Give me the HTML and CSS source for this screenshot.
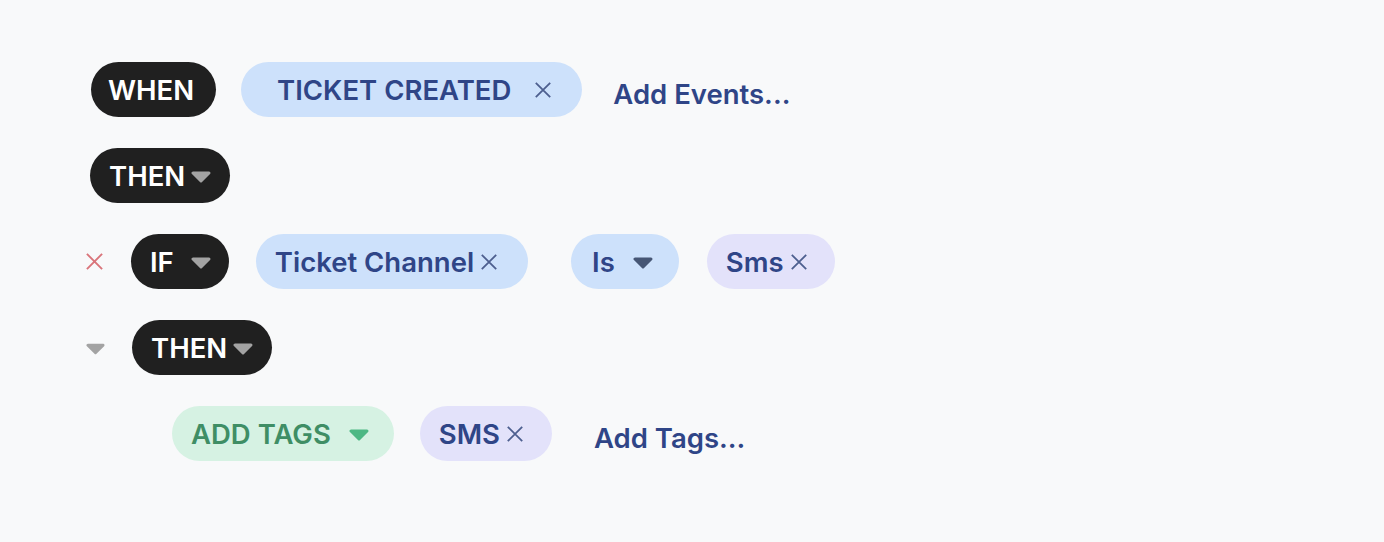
FILE: index.html
```html
<!DOCTYPE html>
<html>
<head>
<meta charset="utf-8">
<link rel="stylesheet" href="styles.css">
</head>
<body>
<div class="flow">
  <div class="row row-when">
    <span class="pill dark pad-when">WHEN</span>
    <span class="pill blue pad-event">TICKET CREATED<span class="x x-wide"><svg viewBox="0 0 20 20"><path d="M2 2L18 18M18 2L2 18"/></svg></span></span>
    <span class="link link-events">Add Events...</span>
  </div>
  <div class="row">
    <span class="pill dark pad-then">THEN<svg class="caret grey" viewBox="0 0 20 12"><path d="M2 2H18L10 10Z"/></svg></span>
  </div>
  <div class="row row-if">
    <span class="side side-x"><svg viewBox="0 0 20 20"><path d="M2 2L18 18M18 2L2 18"/></svg></span>
    <span class="pill dark pad-if">IF<svg class="caret grey caret-if" viewBox="0 0 20 12"><path d="M2 2H18L10 10Z"/></svg></span>
    <span class="pill blue pad-chan">Ticket Channel<span class="x"><svg viewBox="0 0 20 20"><path d="M2 2L18 18M18 2L2 18"/></svg></span></span>
    <span class="pill blue pad-is">Is<svg class="caret navy" viewBox="0 0 20 12"><path d="M2 2H18L10 10Z"/></svg></span>
    <span class="pill purple pad-sms">Sms<span class="x"><svg viewBox="0 0 20 20"><path d="M2 2L18 18M18 2L2 18"/></svg></span></span>
  </div>
  <div class="row row-then2">
    <span class="side side-caret"><svg class="caret grey" viewBox="0 0 20 12"><path d="M2 2H18L10 10Z"/></svg></span>
    <span class="pill dark pad-then">THEN<svg class="caret grey" viewBox="0 0 20 12"><path d="M2 2H18L10 10Z"/></svg></span>
  </div>
  <div class="row row-tags">
    <span class="pill green pad-tags">ADD TAGS<svg class="caret greenc" viewBox="0 0 20 12"><path d="M2 2H18L10 10Z"/></svg></span>
    <span class="pill purple pad-smsu">SMS<span class="x"><svg viewBox="0 0 20 20"><path d="M2 2L18 18M18 2L2 18"/></svg></span></span>
    <span class="link link-tags">Add Tags...</span>
  </div>
</div>
</body>
</html>
```
FILE: styles.css
```css
html, body {
  margin: 0;
  padding: 0;
  background: #f8f9fa;
  width: 1384px;
  height: 542px;
  overflow: hidden;
}
body {
  font-family: Inter, "Noto Sans", sans-serif;
  font-weight: 600;
  font-size: 27.5px;
}
.flow {
  display: flex;
  flex-direction: column;
  gap: 31px;
  padding: 62px 0 0 90px;
}
.row {
  display: flex;
  align-items: center;
  height: 55px;
}
.pill {
  display: inline-flex;
  align-items: center;
  height: 55px;
  box-sizing: border-box;
  border-radius: 28px;
  white-space: nowrap;
}
.dark { background: #202020; color: #ffffff; }
.blue { background: #cde1fb; color: #2f4587; }
.purple { background: #e3e2fa; color: #2f4587; }
.green { background: #d6f2e3; color: #3f8e65; }

.row-when { margin-left: 1px; }
.pad-when { padding: 0 22px 0 17px; }
.pad-event { padding: 0 30px 0 36px; margin-left: 25px; }
.pad-then { padding: 0 19px 0 19px; }
.pad-if { padding: 0 18px 0 19px; }
.pad-chan { padding: 0 30px 0 19px; margin-left: 27px; }
.pad-is { padding: 0 26px 0 21px; margin-left: 43px; }
.pad-sms { padding: 0 27px 0 19px; margin-left: 28px; }
.pad-tags { padding: 0 25px 0 19px; }
.pad-smsu { padding: 0 28px 0 19px; margin-left: 26px; }

.x { display: inline-flex; width: 18px; height: 18px; margin-left: 6px; }
.x-wide { margin-left: 23px; }
.x svg, .side-x svg { width: 100%; height: 100%; display: block; }
.x path { stroke: #4d5f8f; stroke-width: 2; fill: none; }

.caret {
  display: block;
  width: 20px;
  height: 12px;
  margin-left: 6px;
  margin-top: 2px;
}
.caret path { stroke-width: 3; stroke-linejoin: round; }
.caret-if { margin-left: 17px; }
.grey path { fill: #a3a3a3; stroke: #a3a3a3; }
.navy path { fill: #465675; stroke: #465675; }
.navy { margin-left: 18px; }
.greenc path { fill: #4db884; stroke: #4db884; }
.greenc { margin-left: 18px; }

.row-if { margin-left: -5px; }
.row-then2 { margin-left: -4px; }
.row-tags { margin-left: 82px; }
.side { display: inline-flex; width: 19px; height: 19px; align-items: center; justify-content: center; }
.side-x { margin-right: 27px; }
.side-x path { stroke: #d9747a; stroke-width: 2; fill: none; }
.side-caret { margin-right: 27px; }
.side-caret .caret { margin-left: 0; }

.link { color: #2f4587; }
.link-events { margin-left: 31px; margin-top: 8px; }
.link-tags { margin-left: 42px; margin-top: 8px; }
```
